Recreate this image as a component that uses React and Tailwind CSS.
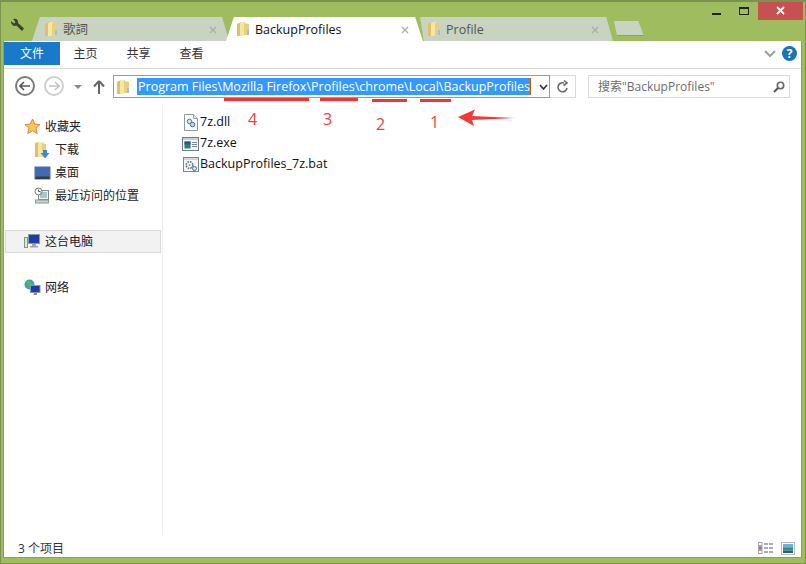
const CJK = '"Open Sans","Noto Sans CJK SC",sans-serif';

function Folder({ size = 16 }) {
  return (
    <svg width={size} height={size} viewBox="0 0 16 16" className="shrink-0">
      <path d="M2 3 L6 1 L6 15 L2 15 Z" fill="#dcc06a" />
      <path d="M5 2 L10 0.5 L10 14 L5 15.5 Z" fill="#f6e6a6" />
      <path d="M9 2 L14 3 L14 14 L9 14 Z" fill="#e9cf7c" />
      <path d="M12 9 L14 9 L14 14 L12 14 Z" fill="#9cc0de" />
    </svg>
  );
}

function Tab({ label, active, className, clip }) {
  return (
    <div className={`h-[24px] relative flex items-center ${className} ${clip} ${active ? "bg-white" : "bg-[#c8d3c1]"}`}>
      <Folder />
      <span className={`ml-[4px] pt-[2px] text-[12.5px] ${active ? "text-[#111]" : "text-[#555]"}`}>{label}</span>
      <svg width="8" height="8" viewBox="0 0 8 8" className="ml-auto mt-[1px]">
        <path d="M1 1 L7 7 M7 1 L1 7" stroke="#a9b0a9" strokeWidth="1.4" />
      </svg>
    </div>
  );
}

function NavItem({ children, icon, indent, selected, gap }) {
  const place = selected
    ? "border border-[#d9d9d9] bg-[#f2f2f2] ml-[1px] w-[156px] pl-[17px]"
    : indent
      ? "pl-[29px]"
      : "pl-[18px] ml-[1px]";
  return (
    <div className={`h-[23px] flex items-center text-[12px] text-[#222] ${place} ${gap || ""}`}>
      <span className="w-[18px] h-[18px] flex items-center justify-center shrink-0">{icon}</span>
      <span className="ml-[4px]">{children}</span>
    </div>
  );
}

const Star = () => (
  <svg width="17" height="17" viewBox="0 0 17 17">
    <path d="M8.5 1 L10.7 6 L16 6.6 L12 10.2 L13.2 15.6 L8.5 12.8 L3.8 15.6 L5 10.2 L1 6.6 L6.3 6 Z" fill="#f7c65a" stroke="#d9893a" strokeWidth="1" />
  </svg>
);
const DownloadFolder = () => (
  <svg width="16" height="18" viewBox="0 0 16 18">
    <path d="M1 2 L5 1 L5 16 L1 16 Z" fill="#dcc06a" />
    <path d="M4 2 L9 1 L9 16 L4 16 Z" fill="#f6e6a6" />
    <path d="M8 2 L12 3 L12 10 L8 10 Z" fill="#e9cf7c" />
    <path d="M9 9 H13 V12 H15.5 L11 17.5 L6.5 12 H9 Z" fill="#3a8ad8" />
  </svg>
);
const Desktop = () => (
  <svg width="17" height="14" viewBox="0 0 17 14">
    <rect x="0.5" y="0.5" width="16" height="13" fill="#5c6f86" />
    <rect x="1.5" y="1.5" width="14" height="8.5" fill="#3d6bb5" />
    <rect x="1.5" y="10.5" width="14" height="2.5" fill="#2b3c55" />
  </svg>
);
const Recent = () => (
  <svg width="16" height="17" viewBox="0 0 16 17">
    <rect x="4.5" y="3.5" width="10" height="9" fill="#eef3f3" stroke="#7e8a8a" />
    <circle cx="4.5" cy="4.5" r="3.5" fill="#fff" stroke="#6f7c7c" />
    <path d="M4.5 2.5 V4.5 H6.5" stroke="#555" fill="none" />
    <path d="M6 6 H13 M6 8 H13 M6 10 H13" stroke="#6d9a9a" />
    <rect x="1.5" y="13" width="13" height="3" fill="#cfd4d4" stroke="#8f9696" />
  </svg>
);
const Computer = () => (
  <svg width="16" height="15" viewBox="0 0 16 15">
    <rect x="0.5" y="3.5" width="3" height="10" fill="#dfe5df" stroke="#7e9a7e" />
    <rect x="4.5" y="0.5" width="11" height="9" fill="#1d3ea8" stroke="#8c97a8" />
    <path d="M8 10 H12 V12 H14 V13.5 H6 V12 H8 Z" fill="#9aa4ad" />
  </svg>
);
const Network = () => (
  <svg width="17" height="17" viewBox="0 0 17 17">
    <circle cx="5.5" cy="5.5" r="5" fill="#39a0c8" />
    <path d="M2 3 Q5 1 7 3 T9 7 Q6 8 4 6 Z" fill="#5cb84c" />
    <rect x="6.5" y="6.5" width="9.5" height="7" fill="#1d3ea8" stroke="#8c97a8" />
    <path d="M10 14 H13 V16 H9.5 Z" fill="#7f8a94" />
  </svg>
);
const DllIcon = () => (
  <svg width="14" height="17" viewBox="0 0 14 17">
    <path d="M0.5 0.5 H9.5 L13.5 4.5 V16.5 H0.5 Z" fill="#fbfcfd" stroke="#8b99a6" />
    <path d="M9.5 0.5 V4.5 H13.5" fill="#e6ebef" stroke="#8b99a6" />
    <circle cx="5.5" cy="7.5" r="2.3" fill="#d3dfe9" stroke="#5d7892" />
    <circle cx="8.5" cy="10.5" r="2.3" fill="#c2d4e4" stroke="#3f6f9e" />
  </svg>
);
const ExeIcon = () => (
  <svg width="17" height="14" viewBox="0 0 17 14">
    <rect x="0.5" y="0.5" width="16" height="13" fill="#f4f6f6" stroke="#6f7c84" />
    <rect x="1" y="1" width="15" height="2" fill="#c7d0d6" />
    <rect x="2.5" y="4.5" width="6" height="7" fill="#2f7f7f" />
    <rect x="2.5" y="4.5" width="6" height="3" fill="#31567f" />
    <path d="M10 5.5 H15 M10 7.5 H15 M10 9.5 H15" stroke="#7b8894" />
  </svg>
);
const BatIcon = () => (
  <svg width="16" height="15" viewBox="0 0 16 15">
    <rect x="0.5" y="0.5" width="15" height="14" fill="#f4f6f6" stroke="#7b8791" />
    <rect x="1" y="1" width="14" height="2" fill="#d1d8dc" />
    <circle cx="6.5" cy="8" r="3.3" fill="none" stroke="#5f6f7c" strokeWidth="1.6" strokeDasharray="1.6 1" />
    <circle cx="6.5" cy="8" r="1" fill="#8d9ba6" />
    <circle cx="11.5" cy="11.5" r="2" fill="#d7e6f2" stroke="#3c78b0" />
  </svg>
);

function FileRow({ icon, name }) {
  return (
    <div className="h-[21px] flex items-center text-[12.5px] text-[#111]">
      <span className="w-[17px] flex justify-center shrink-0">{icon}</span>
      <span className="ml-[1px]">{name}</span>
    </div>
  );
}

const AnnotationNum = ({ x, y, children }) => (
  <span className="absolute text-[16px] leading-none text-[#f0403c]" style={{ left: x, top: y }}>{children}</span>
);
const Line = ({ x, y, w }) => (
  <div className="absolute h-[3px] bg-[#f53333]" style={{ left: x, top: y, width: w }} />
);

export default function App() {
  return (
    <div
      className="w-[806px] h-[564px] relative overflow-hidden bg-[#9fbc5f] border border-[#7c9350] border-t-2 flex flex-col pl-[2px] pr-[3px] pb-[5px]"
      style={{ fontFamily: CJK }}
    >
      {/* title bar */}
      <div className="h-[39px] shrink-0 flex relative">
        <div className="w-[29px] pl-[7px] pt-[16px]">
          <svg width="15" height="14" viewBox="0 0 15 14">
            <path d="M1 3 L4 5.5 L5.5 4 L3 1 Q6 0 7.5 2 Q8.5 4 8 5 L14 10.5 L12 13 L6.5 7.5 Q4 8.5 2.5 7 Q0.5 5.5 1 3 Z" fill="#3b4034" />
          </svg>
        </div>
        <div className="flex items-end h-[39px]">
          <Tab label="歌詞" className="w-[197px] pl-[11px] pr-[12px]" clip="[clip-path:polygon(4%_0,96.5%_0,100%_100%,0_100%)] rounded-t-[3px]" />
          <Tab label="BackupProfiles" active className="w-[197px] pl-[9px] pr-[14px] -ml-[3px] z-10" clip="[clip-path:polygon(4%_0,96%_0,100%_100%,0_100%)]" />
          <Tab label="Profile" className="w-[195px] pl-[8px] pr-[14px] -ml-[5px]" clip="[clip-path:polygon(1%_0,96.5%_0,100%_100%,3%_100%)]" />
          <div className="w-[32px] h-[15px] -ml-[1px] mb-[5px] bg-[#c8d3c1] border-b border-[#8b9e6f] [clip-path:polygon(6%_0,82%_0,100%_100%,16%_100%)]" />
        </div>
        <div className="ml-auto flex items-start -mr-px -mt-px">
          <div className="w-[28px] h-[19px] flex items-center justify-center pt-[7px]">
            <div className="w-[9px] h-[2px] bg-[#222]" />
          </div>
          <div className="w-[28px] h-[19px] flex items-center justify-center">
            <div className="w-[10px] h-[8px] border border-t-2 border-[#222]" />
          </div>
          <div className="w-[45px] h-[19px] bg-[#c75050] flex items-center justify-center">
            <svg width="9" height="9" viewBox="0 0 9 9"><path d="M1 1 L8 8 M8 1 L1 8" stroke="#fff" strokeWidth="1.8" /></svg>
          </div>
        </div>
      </div>

      {/* window */}
      <div className="flex-1 bg-white flex flex-col border border-[#8a9e67] border-t-0 min-h-0">
        {/* ribbon */}
        <div className="h-[28px] shrink-0 flex items-stretch border-b border-[#dadbdc] relative pt-[1px]">
          <div className="w-[56px] h-[23px] bg-[#1979ca] text-white text-[12px] flex items-center justify-center">文件</div>
          <div className="flex text-[12px] text-[#333] pb-[3px] -ml-px">
            <span className="w-[53px] flex items-center justify-center">主页</span>
            <span className="w-[53px] flex items-center justify-center">共享</span>
            <span className="w-[53px] flex items-center justify-center">查看</span>
          </div>
          <div className="ml-auto flex items-center pr-[4px] pb-[3px]">
            <svg width="12" height="8" viewBox="0 0 12 8"><path d="M1 1 L6 6 L11 1" stroke="#a0a0a0" strokeWidth="2" fill="none" /></svg>
            <span className="ml-[6px] w-[15px] h-[15px] rounded-full bg-[#1a72bb] text-white text-[12px] font-bold leading-[15px] text-center">?</span>
          </div>
        </div>

        {/* address row */}
        <div className="h-[36px] shrink-0 flex items-start pt-[6px] pl-[11px]">
          <div className="w-[20px] h-[20px] rounded-full border-2 border-[#7b7b7b] flex items-center justify-center mt-[1px]">
            <svg width="12" height="10" viewBox="0 0 12 10"><path d="M5 1 L1 5 L5 9 M1 5 H11" stroke="#555" strokeWidth="1.6" fill="none" /></svg>
          </div>
          <div className="w-[20px] h-[20px] rounded-full border-2 border-[#cfcfcf] flex items-center justify-center mt-[1px] ml-[9px]">
            <svg width="12" height="10" viewBox="0 0 12 10"><path d="M7 1 L11 5 L7 9 M11 5 H1" stroke="#c4c4c4" strokeWidth="1.6" fill="none" /></svg>
          </div>
          <svg width="8" height="4" viewBox="0 0 8 4" className="ml-[10px] mt-[10px]"><path d="M0 0 H8 L4 4 Z" fill="#888" /></svg>
          <svg width="12" height="14" viewBox="0 0 12 14" className="ml-[11px] mt-[5px]"><path d="M6 1 L1 6.5 M6 1 L11 6.5 M6 1 V14" stroke="#666" strokeWidth="2" fill="none" /></svg>
          <div className="ml-[8px] w-[437px] h-[23px] border border-[#6aa5dc] flex items-center pl-[1px] relative">
            <Folder />
            <span className="ml-[6px] pl-px pr-0 h-[17px] bg-[#3399ff] text-white text-[12.5px] leading-[17px] whitespace-nowrap border-r border-[#b85c00] w-[394px] overflow-hidden">
              Program Files\Mozilla Firefox\Profiles\chrome\Local\BackupProfiles
            </span>
            <svg width="9" height="6" viewBox="0 0 9 6" className="ml-[8px]"><path d="M1 1 L4.5 5 L8 1" stroke="#333" strokeWidth="1.6" fill="none" /></svg>
          </div>
          <div className="w-[26px] h-[23px] border border-l-0 border-[#d9d9d9] flex items-center justify-center">
            <svg width="12" height="13" viewBox="0 0 12 13"><path d="M10 8 A4.5 4.5 0 1 1 7 3 M7 0.5 L10 3 L6.5 5.5" stroke="#6b6b6b" strokeWidth="1.6" fill="none" /></svg>
          </div>
          <div className="ml-[12px] w-[202px] h-[23px] border border-[#d9d9d9] flex items-center pl-[9px] pr-[4px] text-[12px] text-[#6d6d6d]">
            <span>搜索"BackupProfiles"</span>
            <svg width="12" height="12" viewBox="0 0 12 12" className="ml-auto"><circle cx="7.5" cy="4.5" r="3.2" stroke="#666" strokeWidth="1.6" fill="none" /><path d="M5 7 L1 11" stroke="#555" strokeWidth="2" /></svg>
          </div>
        </div>

        {/* body */}
        <div className="flex-1 flex min-h-0">
          <div className="w-[159px] shrink-0 border-r border-[#eeeeee] pt-[10px]">
            <NavItem icon={<Star />}>收藏夹</NavItem>
            <NavItem icon={<DownloadFolder />} indent>下载</NavItem>
            <NavItem icon={<Desktop />} indent>桌面</NavItem>
            <NavItem icon={<Recent />} indent>最近访问的位置</NavItem>
            <NavItem icon={<Computer />} selected gap="mt-[23px]">这台电脑</NavItem>
            <NavItem icon={<Network />} gap="mt-[23px]">网络</NavItem>
          </div>
          <div className="flex-1 pt-[7px] pl-[19px]">
            <FileRow icon={<DllIcon />} name="7z.dll" />
            <FileRow icon={<ExeIcon />} name="7z.exe" />
            <FileRow icon={<BatIcon />} name="BackupProfiles_7z.bat" />
          </div>
        </div>

        {/* status bar */}
        <div className="h-[22px] shrink-0 flex items-center pl-[14px] pr-[6px] pt-[5px] text-[12px] text-[#333]">
          <span>3 个项目</span>
          <div className="ml-auto flex items-center">
            <svg width="16" height="13" viewBox="0 0 16 13">
              <rect x="0.5" y="0.5" width="3.5" height="3" fill="#fff" stroke="#9aa6b8" />
              <rect x="0.5" y="4.5" width="3.5" height="3" fill="#e85a5a" stroke="#9aa6b8" />
              <rect x="0.5" y="8.5" width="3.5" height="3" fill="#fff" stroke="#9aa6b8" />
              <path d="M6 2 H15 M6 6 H15 M6 10 H15" stroke="#4a5a78" strokeDasharray="4 1" />
            </svg>
            <span className="ml-[7px] w-[14px] h-[13px] border border-[#b4b9c2] p-px flex">
              <svg width="100%" height="100%" viewBox="0 0 11 11" preserveAspectRatio="none"><rect width="11" height="4" fill="#6ab0e0" /><rect y="4" width="11" height="4" fill="#3d8f6a" /><rect y="8" width="11" height="3" fill="#1f5f7a" /></svg>
            </span>
          </div>
        </div>
      </div>

      {/* red annotations drawn over the window */}
      <Line x={223} y={96} w={85} />
      <Line x={319} y={96} w={38} />
      <Line x={371} y={97} w={35} />
      <Line x={419} y={97} w={31} />
      <AnnotationNum x={247} y={109}>4</AnnotationNum>
      <AnnotationNum x={322} y={109}>3</AnnotationNum>
      <AnnotationNum x={375} y={114}>2</AnnotationNum>
      <AnnotationNum x={429} y={112}>1</AnnotationNum>
      <svg width="60" height="18" viewBox="0 0 60 18" className="absolute left-[456px] top-[107px]">
        <path d="M1 8 L18 0.5 L15 7 L59 9 L15 11 L17 17 Z" fill="#f53838" />
      </svg>
    </div>
  );
}
